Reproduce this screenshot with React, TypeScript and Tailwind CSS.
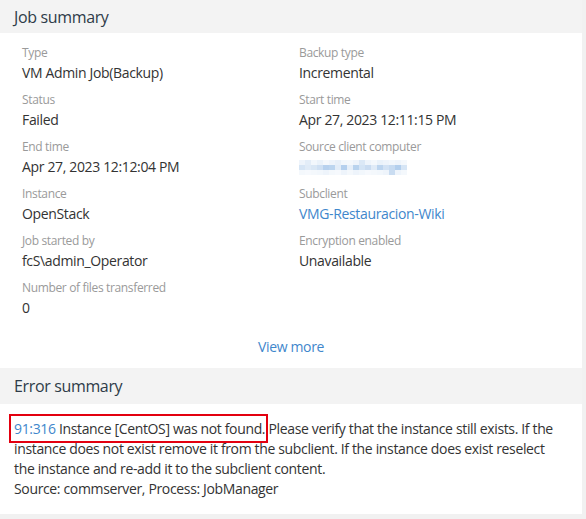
const FONT = "font-['Open_Sans',sans-serif] tracking-[-0.35px]";

type Field = { label: string; value: string; link?: boolean; blurred?: boolean };

const FIELDS: Field[] = [
  { label: "Type", value: "VM Admin Job(Backup)" },
  { label: "Backup type", value: "Incremental" },
  { label: "Status", value: "Failed" },
  { label: "Start time", value: "Apr 27, 2023 12:11:15 PM" },
  { label: "End time", value: "Apr 27, 2023 12:12:04 PM" },
  { label: "Source client computer", value: "", blurred: true },
  { label: "Instance", value: "OpenStack" },
  { label: "Subclient", value: "VMG-Restauracion-Wiki", link: true },
  { label: "Job started by", value: "fcS\\admin_Operator" },
  { label: "Encryption enabled", value: "Unavailable" },
  { label: "Number of files transferred", value: "0" },
];

// pixelated placeholder for the hidden client name
const PIXELS = [
  ["#eef4fb", "#e3edf8", "#f2f7fc", "#eaf2fa", "#f4f8fc", "#eef4fb", "#e8f0f9", "#f2f7fc", "#f4f8fc", "#eef4fb", "#dbe8f6", "#eef4fb", "#f4f8fc", "#eaf2fa", "#eef4fb", "#f2f7fc", "#eef4fb", "#f4f8fc"],
  ["#d6e5f5", "#e0ebf7", "#d9e7f5", "#cfe0f3", "#b7d1ee", "#bcd5ef", "#e3edf8", "#b5d0ee", "#e6eff9", "#b9d3ee", "#d4e4f5", "#cadcf1", "#e0ebf7", "#bdd5ef", "#d2e2f4", "#c7dbf1", "#b3cfed", "#d6e5f5"],
  ["#f4f8fc", "#f6f9fd", "#f4f8fc", "#f2f7fc", "#eef4fb", "#f4f8fc", "#f6f9fd", "#eef4fb", "#f4f8fc", "#eef4fb", "#f2f7fc", "#f6f9fd", "#f4f8fc", "#f2f7fc", "#eef4fb", "#c9dcf1", "#eef4fb", "#f4f8fc"],
];

function Blurred() {
  return (
    <div className="flex h-[20px] items-center">
      <div className="flex flex-col">
        {PIXELS.map((row, i) => (
          <div key={i} className="flex">
            {row.map((c, j) => (
              <div key={j} className="h-[5px] w-[6px]" style={{ backgroundColor: c }} />
            ))}
          </div>
        ))}
      </div>
    </div>
  );
}

function Item({ f }: { f: Field }) {
  return (
    <div className="flex flex-col gap-[2px]">
      <div className="text-[12px] leading-[16px] text-[#9a9a9a]">{f.label}</div>
      {f.blurred ? (
        <Blurred />
      ) : (
        <div
          className={`text-[14px] leading-[20px] ${f.link ? "text-[#3f87cc]" : "text-[#333333]"}`}
        >
          {f.value}
        </div>
      )}
    </div>
  );
}

function SectionHeader({ title, h }: { title: string; h: string }) {
  return (
    <div className={`flex items-center bg-[#f3f3f3] px-[14px] text-[16px] text-[#2e3b48] ${h}`}>
      {title}
    </div>
  );
}

export default function App() {
  return (
    <div className={`h-[519px] w-[586px] overflow-hidden bg-[#f1f1f1] ${FONT}`}>
      <div className="w-[582px] bg-white">
        <SectionHeader title="Job summary" h="h-[33px]" />

        <div className="grid grid-cols-[277px_1fr] gap-y-[9px] px-[22px] pt-[12px]">
          {FIELDS.map((f) => (
            <Item key={f.label} f={f} />
          ))}
        </div>

        <div className="flex justify-center pb-[11px] pt-[19px]">
          <a className="cursor-pointer text-[14px] leading-[20px] text-[#3f87cc]">View more</a>
        </div>

        <SectionHeader title="Error summary" h="h-[36px]" />

        <div className="px-[14px] pb-[15px] pt-[15px] text-[14px] leading-[20px] text-[#333333]">
          <p>
            {/* red highlight box split across two sibling spans */}
            <span className="-ml-[5px] border-y-2 border-l-2 border-[#e3000f] py-[3px] pl-[3px] text-[#3f87cc]">
              91:316
            </span>
            <span className="-mr-[3px] border-y-2 border-r-2 border-[#e3000f] py-[3px] pr-[1px]">
              {" "}Instance [CentOS] was not found.
            </span>{" "}
            Please verify that the instance still exists. If the instance does not exist remove it
            from the subclient. If the instance does exist reselect the instance and re-add it to
            the subclient content.
          </p>
          <p>Source: commserver, Process: JobManager</p>
        </div>
      </div>
    </div>
  );
}
